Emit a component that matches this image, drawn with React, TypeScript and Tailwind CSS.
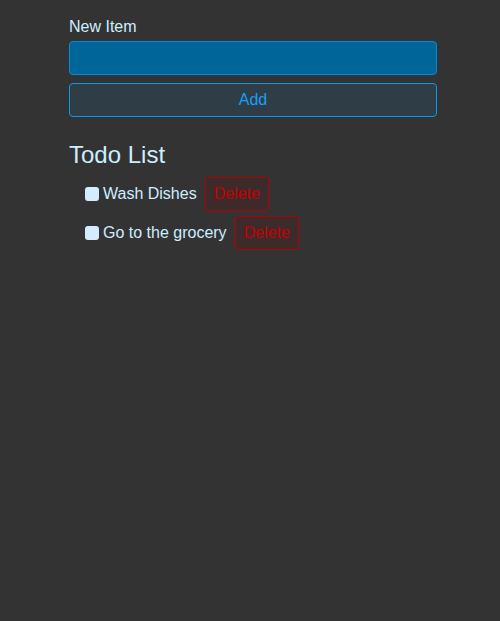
const todos = ["Wash Dishes", "Go to the grocery"];

export default function App() {
  return (
    <div className="min-h-[621px] bg-[#333333] font-['Liberation_Sans',Arial,sans-serif] text-[#cdeeff]">
      <div className="ml-[69px] w-[368px] pt-[18px]">
        <label className="block text-base leading-[18px]">New Item</label>
        <input
          type="text"
          className="mt-[5px] block h-[34px] w-full rounded-[4px] border border-[#0a8ad6] bg-[#006699] px-2 text-white outline-none"
        />
        <button className="mt-2 block h-[34px] w-full rounded-[4px] border border-[#0a9be8] bg-[#2f3e46] text-base text-[#1c9df5]">
          Add
        </button>
        <h2 className="mt-[24px] text-2xl leading-[28px]">Todo List</h2>
        <ul className="mt-[8px] pl-4">
          {todos.map((t) => (
            <li key={t} className="mb-[5px] flex items-center gap-2">
              <input
                type="checkbox"
                className="h-[14px] w-[14px] appearance-none rounded-[3px] bg-[#d3edff]"
              />
              <span className="-ml-[4px] text-base">{t}</span>
              <button className="h-[34px] rounded-[3px] border border-[#b30000] bg-[#3d2b2b] px-[8px] text-base text-[#c40000]">
                Delete
              </button>
            </li>
          ))}
        </ul>
      </div>
    </div>
  );
}
